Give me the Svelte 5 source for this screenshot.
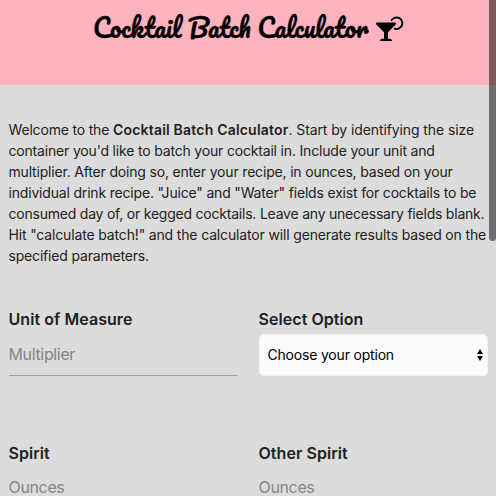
<script>
  const fields = [
    { label: 'Unit of Measure', hint: 'Multiplier' },
    { label: 'Select Option', select: true },
    { label: 'Spirit', hint: 'Ounces', ingredient: true },
    { label: 'Other Spirit', hint: 'Ounces', ingredient: true }
  ];
</script>

<div class="page">
  <header>
    <h1>Cocktail Batch Calculator</h1>
    <svg class="glass" width="29" height="28" viewBox="0 0 29 28" aria-hidden="true">
      <path d="M0 7.3Q0 6.4 1 6.4H19Q20 6.4 20 7.3Q20 8.2 19.2 9L12 16.2V22.8H14Q16.2 23 16.2 25H3.8Q3.8 23 6 22.8H8V16.2L.8 9Q0 8.2 0 7.3Z" />
      <path d="M15.2 4.9A5.8 5.8 0 1 1 18 12.5" fill="none" stroke="#000" stroke-width="1.9" />
    </svg>
  </header>
  <main>
    <p>
      Welcome to the <b>Cocktail Batch Calculator</b><span class="loose">. Start by identifying the size</span><br />
      container you'd like to batch your cocktail in. Include your unit and<br />
      multiplier. After doing so, enter your recipe, in ounces, based on your<br />
      individual drink recipe. "Juice" and "Water" fields exist for cocktails to be<br />
      <span class="tight">consumed day of, or kegged cocktails. Leave any unecessary fields blank.</span><br />
      <span class="wide">Hit "calculate batch!" and the calculator will generate results based on the</span><br />
      specified parameters.
    </p>
    <div class="grid">
      {#each fields as field}
        <section>
          <h2>{field.label}</h2>
          {#if field.select}
            <div class="select">
              <span>Choose your option</span>
              <svg width="6" height="12" viewBox="0 0 6 12" aria-hidden="true">
                <path d="M3 0L6 5H0ZM0 7H6L3 12Z" />
              </svg>
            </div>
          {:else}
            <div class="input" class:ingredient={field.ingredient}>{field.hint}</div>
          {/if}
        </section>
      {/each}
    </div>
  </main>
  <div class="thumb"></div>
</div>

<style>
  .page {
    position: relative;
    width: 496px;
    height: 496px;
    overflow: hidden;
    background: #dcdcdc;
    color: #212121;
    font-family: Inter, 'Liberation Sans', sans-serif;
  }
  header {
    box-sizing: border-box;
    height: 85px;
    padding: 9px 0 0 93px;
    display: flex;
    align-items: flex-start;
    background: #ffb3bf;
    color: #000;
  }
  h1 {
    width: 282px;
    margin: 0;
    font: 400 25px/36px Pacifico, cursive;
    -webkit-text-stroke: 0.35px #000;
    white-space: nowrap;
  }
  .glass { margin: 7px 0 0 0.5px; flex: none; }
  main { padding: 34px 8px 0 8.5px; }
  p {
    margin: 0;
    font-size: 14px;
    line-height: 21px;
    letter-spacing: -0.18px;
    white-space: nowrap;
  }
  b { font-weight: 600; letter-spacing: 0.2px; }
  .loose { letter-spacing: -0.1px; }
  .tight { letter-spacing: -0.22px; }
  .wide { letter-spacing: -0.155px; }
  .grid {
    margin-top: 41px;
    display: grid;
    grid-template-columns: 229.5px 229.5px;
    column-gap: 20.5px;
    grid-auto-rows: 134px;
  }
  h2 {
    margin: 0;
    font-size: 16px;
    line-height: 24px;
    font-weight: 600;
    letter-spacing: 0.06px;
  }
  .input {
    box-sizing: border-box;
    height: 44px;
    margin-top: 1px;
    border-bottom: 1px solid #9e9e9e;
    color: #858585;
    font-size: 16px;
    line-height: 44px;
    letter-spacing: -0.35px;
  }
  .ingredient { line-height: 42px; }
  .select {
    box-sizing: border-box;
    height: 42px;
    margin-top: 3px;
    padding: 0 4px 1px 8px;
    display: flex;
    align-items: center;
    justify-content: space-between;
    border: 1px solid #f2f2f2;
    border-radius: 5px;
    background: #fbfbfb;
    color: #000;
    font-size: 14px;
    letter-spacing: -0.19px;
  }
  .thumb {
    position: absolute;
    top: -8px;
    right: 0;
    width: 7px;
    height: 249px;
    border-radius: 0 0 4px 4px;
    background: rgba(0, 0, 0, 0.5);
  }
</style>
